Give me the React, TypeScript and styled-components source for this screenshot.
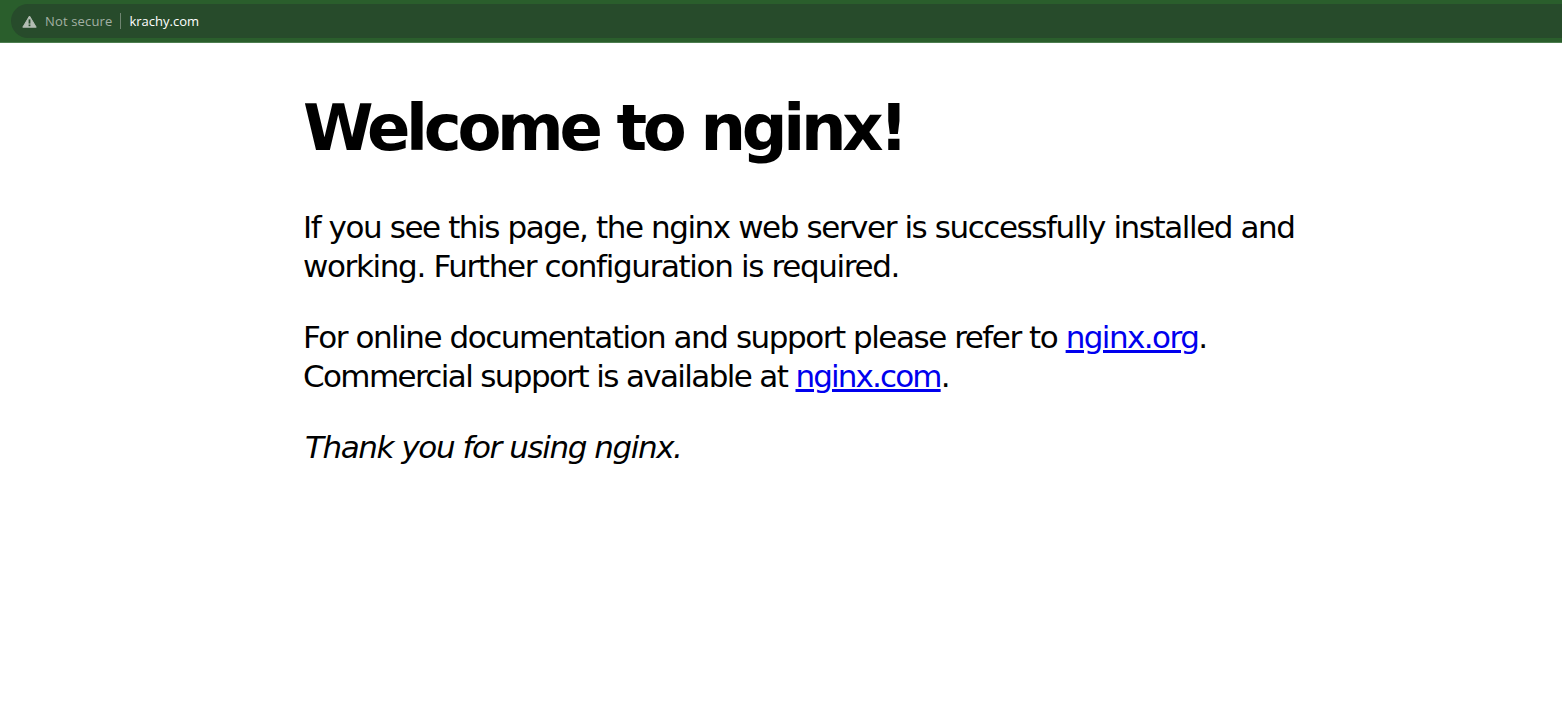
import React from 'react';
import styled, { createGlobalStyle } from 'styled-components';

const GlobalStyle = createGlobalStyle`
  html, body {
    margin: 0;
    padding: 0;
    background: #ffffff;
  }
`;

const TopBar = styled.div`
  height: 43px;
  padding: 4px 0 4px 11px;
  box-sizing: border-box;
  background: #2a5e2c;
  border-bottom: 1px solid #4d7d50;
`;

const AddressBar = styled.div`
  height: 34px;
  display: flex;
  align-items: center;
  padding-left: 11px;
  background: #274b2b;
  border-radius: 17px 0 0 17px;
  font: 13px 'Open Sans', sans-serif;
`;

const NotSecure = styled.span`
  margin-left: 8px;
  color: #a3b0a4;
  letter-spacing: 0.15px;
`;

const Divider = styled.span`
  width: 1px;
  height: 16px;
  margin: 0 8px 0 8px;
  background: #6f8571;
`;

const Host = styled.span`
  color: #ffffff;
  font-weight: 500;
  letter-spacing: 0;
`;

const Page = styled.main`
  width: 1000px;
  margin-left: 303px;
  font-family: 'DejaVu Sans', Verdana, sans-serif;
  color: #000000;
`;

const Title = styled.h1`
  margin: 43px 0 0;
  font-size: 64px;
  line-height: 85px;
  font-weight: 700;
  letter-spacing: -4.3px;
  & + p {
    margin-top: 37px;
  }
`;

const Paragraph = styled.p<{ $italic?: boolean }>`
  margin: 32px 0 0;
  padding-left: ${({ $italic }) => ($italic ? '2px' : '0')};
  font-size: 31px;
  line-height: 39px;
  letter-spacing: -1.43px;
  font-style: ${({ $italic }) => ($italic ? 'italic' : 'normal')};
`;

const Line = styled.span<{ $tracking: number }>`
  letter-spacing: ${({ $tracking }) => $tracking}px;
`;

const Anchor = styled.a<{ $tracking: number }>`
  color: #0000ee;
  text-decoration: underline;
  letter-spacing: ${({ $tracking }) => $tracking}px;
`;

function WarningIcon() {
  return (
    <svg width="15" height="13" viewBox="0 0 15 13">
      <path d="M7.5 1 L14.2 12.2 H0.8 Z" fill="#b4bdb4" stroke="#b4bdb4" strokeWidth="1" strokeLinejoin="round" />
      <rect x="6.6" y="4.4" width="1.8" height="4.2" fill="#274b2b" />
      <rect x="6.6" y="9.5" width="1.8" height="1.7" fill="#274b2b" />
    </svg>
  );
}

export default function App() {
  return (
    <>
      <GlobalStyle />
      <TopBar>
        <AddressBar>
          <WarningIcon />
          <NotSecure>Not secure</NotSecure>
          <Divider />
          <Host>krachy.com</Host>
        </AddressBar>
      </TopBar>
      <Page>
        <Title>Welcome to nginx!</Title>
        <Paragraph>
          If you see this page, the nginx web server is successfully installed and
          <br />
          <Line $tracking={-1.36}>working. Further configuration is required.</Line>
        </Paragraph>
        <Paragraph>
          <Line $tracking={-1.47}>For online documentation and support please refer to </Line>
          <Anchor href="#" $tracking={-1.55}>nginx.org</Anchor>.
          <br />
          <Line $tracking={-1.63}>Commercial support is available at </Line>
          <Anchor href="#" $tracking={-1.87}>nginx.com</Anchor>.
        </Paragraph>
        <Paragraph $italic>Thank you for using nginx.</Paragraph>
      </Page>
    </>
  );
}
